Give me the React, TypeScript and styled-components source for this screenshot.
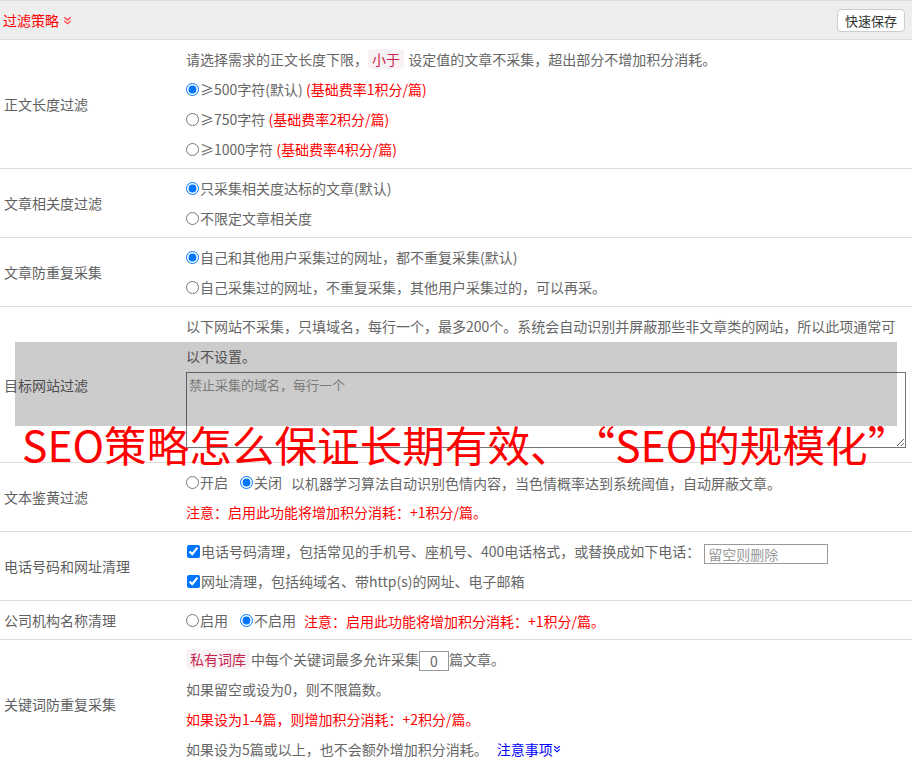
import React from 'react';
import styled, { createGlobalStyle } from 'styled-components';

const GlobalStyle = createGlobalStyle`
  html, body {
    margin: 0;
    padding: 0;
    background: #fff;
  }
  body {
    font-family: "Noto Sans CJK SC", "Noto Sans", sans-serif;
    font-size: 14px;
    color: #666;
    text-spacing-trim: space-all;
  }
`;

const Page = styled.div`
  position: relative;
  width: 912px;
  overflow: hidden;
`;

const Header = styled.div`
  display: flex;
  align-items: center;
  justify-content: space-between;
  height: 38px;
  padding: 0 7px 0 3px;
  background: #eee;
  border-top: 1px solid #ddd;
  border-bottom: 1px solid #ddd;
`;

const Title = styled.span`
  display: inline-flex;
  align-items: center;
  gap: 4px;
  color: #f00;
  font-size: 14px;
`;

const SaveButton = styled.button`
  height: 23px;
  padding: 0 7px;
  background: #fff;
  border: 1px solid #ccc;
  border-radius: 4px;
  font-family: inherit;
  font-size: 13px;
  color: #333;
  line-height: 21px;
`;

const Row = styled.div`
  display: flex;
  border-bottom: 1px solid #ddd;
`;

const Label = styled.div`
  display: flex;
  align-items: center;
  width: 182px;
  padding-left: 4px;
  flex-shrink: 0;
  color: #5f5f5f;
`;

const Content = styled.div`
  flex: 1;
  padding: 4px 0;
`;

const Line = styled.div<{ $red?: boolean }>`
  height: 30px;
  line-height: 30px;
  white-space: nowrap;
  color: ${p => (p.$red ? '#f00' : '#666')};
`;

const Red = styled.span`
  color: #f00;
`;

const Choice = styled.label<{ $gap?: number }>`
  display: inline-flex;
  align-items: center;
  margin-right: ${p => p.$gap ?? 0}px;
`;

const Radio = styled.input.attrs({ type: 'radio' })`
  width: 13px;
  height: 13px;
  margin: 0 1px 0 0;
  accent-color: #0075ff;
`;

const Check = styled.input.attrs({ type: 'checkbox' })`
  width: 13px;
  height: 13px;
  margin: 0 1px 0 1px;
  accent-color: #0075ff;
`;

const Code = styled.span`
  display: inline-block;
  line-height: 20px;
  padding: 0 4px;
  margin-right: 1px;
  background: #f9f2f4;
  color: #c7254e;
  border-radius: 4px;
`;

const Area = styled.textarea`
  display: block;
  box-sizing: border-box;
  width: 720px;
  height: 76px;
  margin: 1px 0 10px;
  padding: 2px;
  border: 1px solid #767676;
  font-family: inherit;
  font-size: 13px;
  resize: both;
  &::placeholder {
    color: #999;
  }
`;

const TextBox = styled.input<{ $w: number; $center?: boolean; $left?: number }>`
  box-sizing: border-box;
  width: ${p => p.$w}px;
  height: 20px;
  margin-left: ${p => p.$left ?? 0}px;
  padding: 0 3px;
  border: 1px solid #999;
  font-family: inherit;
  font-size: 14px;
  color: #666;
  vertical-align: middle;
  text-align: ${p => (p.$center ? 'center' : 'left')};
  &::placeholder {
    color: #999;
  }
`;

const Link = styled.a`
  display: inline-flex;
  align-items: center;
  margin-left: 9px;
  color: #00f;
  text-decoration: none;
`;

const Shade = styled.div`
  position: absolute;
  left: 15px;
  top: 342px;
  width: 882px;
  height: 84px;
  background: rgba(0, 0, 0, 0.2);
  pointer-events: none;
`;

const Watermark = styled.div`
  position: absolute;
  left: 22px;
  top: 420px;
  font-family: "Noto Sans CJK SC", sans-serif;
  font-size: 42.6px;
  line-height: 48px;
  color: #f00;
  white-space: nowrap;
  pointer-events: none;
`;

const WideQuote = styled.span`
  font-feature-settings: "fwid" 1;
`;

const Chevrons = ({ color, size = 9 }: { color: string; size?: number }) => (
  <svg width={size} height={size} viewBox="0 0 10 10" fill="none" stroke={color} strokeWidth="1.4">
    <polyline points="1.5,1.5 5,4.5 8.5,1.5" />
    <polyline points="1.5,5.5 5,8.5 8.5,5.5" />
  </svg>
);

export default function App() {
  return (
    <Page lang="zh-CN">
      <GlobalStyle />
      <Header>
        <Title>
          过滤策略
          <Chevrons color="#f44" />
        </Title>
        <SaveButton>快速保存</SaveButton>
      </Header>

      <Row>
        <Label>正文长度过滤</Label>
        <Content>
          <Line>
            请选择需求的正文长度下限，<Code>小于</Code> 设定值的文章不采集，超出部分不增加积分消耗。
          </Line>
          <Line>
            <Choice>
              <Radio name="len" defaultChecked />≥500字符(默认)&nbsp;<Red>(基础费率1积分/篇)</Red>
            </Choice>
          </Line>
          <Line>
            <Choice>
              <Radio name="len" />≥750字符&nbsp;<Red>(基础费率2积分/篇)</Red>
            </Choice>
          </Line>
          <Line>
            <Choice>
              <Radio name="len" />≥1000字符&nbsp;<Red>(基础费率4积分/篇)</Red>
            </Choice>
          </Line>
        </Content>
      </Row>

      <Row>
        <Label>文章相关度过滤</Label>
        <Content>
          <Line>
            <Choice>
              <Radio name="rel" defaultChecked />只采集相关度达标的文章(默认)
            </Choice>
          </Line>
          <Line>
            <Choice>
              <Radio name="rel" />不限定文章相关度
            </Choice>
          </Line>
        </Content>
      </Row>

      <Row>
        <Label>文章防重复采集</Label>
        <Content>
          <Line>
            <Choice>
              <Radio name="dup" defaultChecked />自己和其他用户采集过的网址，都不重复采集(默认)
            </Choice>
          </Line>
          <Line>
            <Choice>
              <Radio name="dup" />自己采集过的网址，不重复采集，其他用户采集过的，可以再采。
            </Choice>
          </Line>
        </Content>
      </Row>

      <Row>
        <Label>目标网站过滤</Label>
        <Content>
          <Line>以下网站不采集，只填域名，每行一个，最多200个。系统会自动识别并屏蔽那些非文章类的网站，所以此项通常可</Line>
          <Line>以不设置。</Line>
          <Area placeholder="禁止采集的域名，每行一个" />
        </Content>
      </Row>

      <Row>
        <Label>文本鉴黄过滤</Label>
        <Content>
          <Line>
            <Choice $gap={12}>
              <Radio name="porn" />开启
            </Choice>
            <Choice $gap={9}>
              <Radio name="porn" defaultChecked />关闭
            </Choice>
            以机器学习算法自动识别色情内容，当色情概率达到系统阈值，自动屏蔽文章。
          </Line>
          <Line $red>注意：启用此功能将增加积分消耗：+1积分/篇。</Line>
        </Content>
      </Row>

      <Row>
        <Label>电话号码和网址清理</Label>
        <Content>
          <Line>
            <Choice>
              <Check defaultChecked />电话号码清理，包括常见的手机号、座机号、400电话格式，或替换成如下电话：
            </Choice>
            <TextBox $w={124} $left={4} placeholder="留空则删除" />
          </Line>
          <Line>
            <Choice>
              <Check defaultChecked />网址清理，包括纯域名、带http(s)的网址、电子邮箱
            </Choice>
          </Line>
        </Content>
      </Row>

      <Row>
        <Label>公司机构名称清理</Label>
        <Content>
          <Line>
            <Choice $gap={12}>
              <Radio name="org" />启用
            </Choice>
            <Choice $gap={8}>
              <Radio name="org" defaultChecked />不启用
            </Choice>
            <Red>注意：启用此功能将增加积分消耗：+1积分/篇。</Red>
          </Line>
        </Content>
      </Row>

      <Row>
        <Label>关键词防重复采集</Label>
        <Content>
          <Line>
            <Code>私有词库</Code>中每个关键词最多允许采集
            <TextBox $w={30} $center defaultValue="0" />
            篇文章。
          </Line>
          <Line>如果留空或设为0，则不限篇数。</Line>
          <Line $red>如果设为1-4篇，则增加积分消耗：+2积分/篇。</Line>
          <Line>
            如果设为5篇或以上，也不会额外增加积分消耗。
            <Link href="#">
              注意事项
              <Chevrons color="#00f" size={8} />
            </Link>
          </Line>
        </Content>
      </Row>

      <Shade />
      <Watermark>
        SEO策略怎么保证长期有效、<WideQuote>“</WideQuote>SEO的规模化<WideQuote>”</WideQuote>
      </Watermark>
    </Page>
  );
}
